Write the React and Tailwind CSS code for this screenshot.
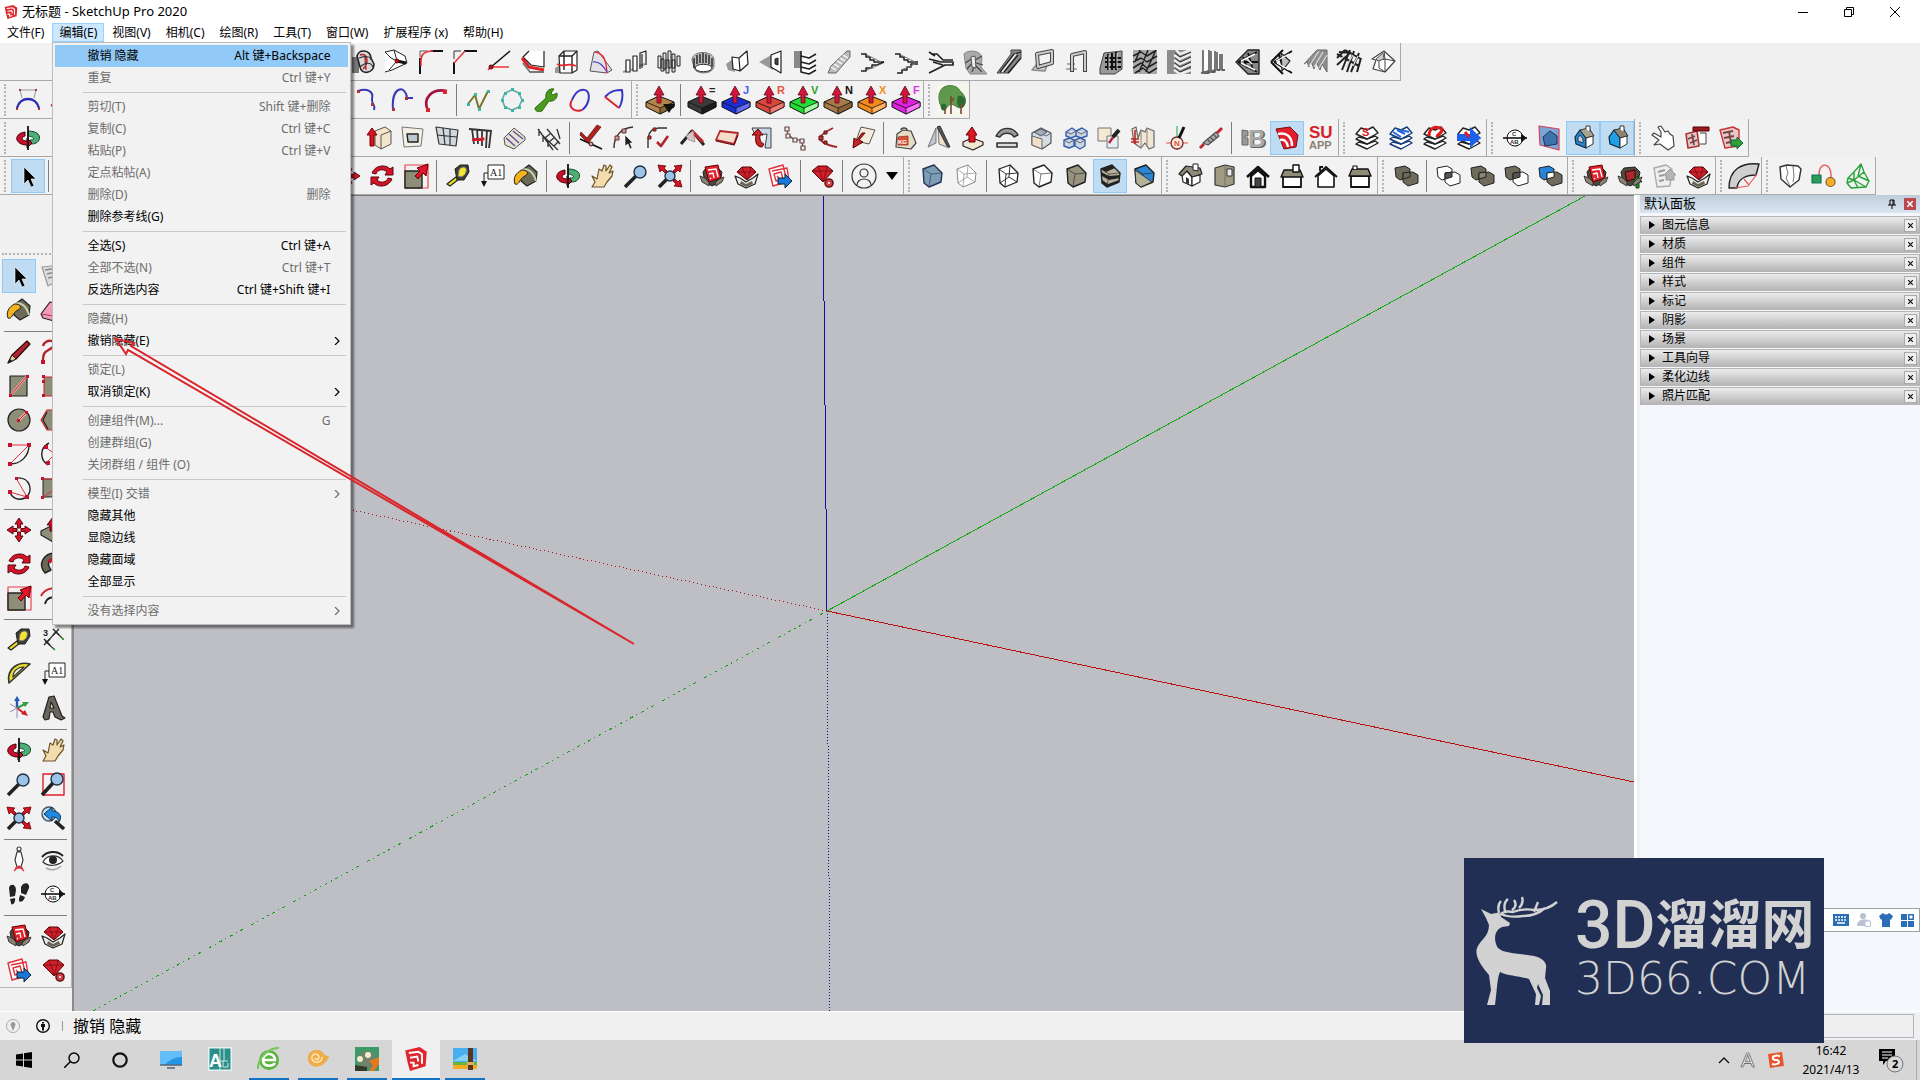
import React from 'react';

// Every icon is a list of shapes on a 24x24 grid.
// Path: [d, fill, stroke, strokeWidth]   Text: { t, x, y, size, fill }
const RED = '#c8102e';
const K = '#222';

const cube = (c, s = K) => [
  ['M3 5 L14 1 L22 9 L21 18 L9 23 L4 19 Z', c, s, 1.4],
  ['M3 5 L11 10 L22 9 M11 10 L9 23', 'none', s, 0.6],
];

const wireCube = (s, w) => [
  ['M3 5 L14 1 L22 9 L21 18 L9 23 L4 19 Z', '#fff', s, w],
  ['M3 5 L10 10 L22 9 M10 10 L9 23 M14 1 L13 13 L4 19 M13 13 L21 18', 'none', s, w * 0.7],
];

const push = (c, side, letter, lc) => [
  ['M-2 14 L11 8 L26 14 L26 19 L12 26 L-2 19 Z', c, '#111', 1],
  ['M12 20 L26 14 L26 19 L12 26 Z', side, '#111', 0.8],
  ['M-2 14 L12 20', 'none', '#111', 0.8],
  ['M9 15 V7 H6 L11 -2 L16 7 H13 V15 Z', '#d4143a', '#5a0a14', 0.8],
  { t: letter, x: 19, y: 6, size: 11, fill: lc },
];

const layers = (c, top) => [
  ['M1 18 L12 23 L23 17 L20 15 L12 18 L4 16 Z', '#fff', c, 1.4],
  ['M1 13 L12 18 L23 12 L20 10 L12 13 L4 11 Z', '#fff', c, 1.4],
  ['M1 8 L12 13 L23 7 L18 1 L12 4 L6 2 Z', '#fff', c, 1.4],
  ...top,
];

const ring = [
  ['M12 5 C22 5 25 10 23 14 C21 18 17 18 14 18 L14 14 C19 14 19 11 12 10 Z', '#4fae74', '#143', 1],
  ['M9 6 C2 7 0 11 1 14 C3 18 7 19 11 19 L11 22 L16 17 L11 12 V15 C5 15 5 11 9 10 Z', RED, '#400', 1],
  ['M12 0 V24', 'none', '#111', 1.8],
];

const lens = (cx = 15, cy = 8, r = 6) => [
  [`M${cx - r + 2} ${cy + r - 2} L1 23`, 'none', '#222', 3.6],
  [`M${cx - r} ${cy} a${r} ${r} 0 1 0 ${2 * r} 0 a${r} ${r} 0 1 0 ${-2 * r} 0`, '#9cc3e8', '#234', 1.4],
];

const solids = (a, b, mid) => [
  ['M1 4 L11 2 L16 5 V13 L6 16 L2 13 Z', a, '#222', 1],
  ['M9 9 L19 8 L24 11 V19 L14 22 L9 18 Z', b, '#222', 1],
  ['M9 9 L16 8 V13 L9 15 Z', mid, '#222', 1],
];

const box = (inner) => [
  ['M3 8 L5 18 L12 22 L20 18 L22 8 L17 3 L6 4 Z', '#4e483f', '#222', 1],
  ...inner,
  ['M0 12 L5 14 L9 18 L9 22 L2 18 Z M24 13 L19 15 L15 19 L16 22 L22 18 Z', '#8b8172', '#222', 0.8],
];

const redTile = [
  ['M5 3 L18 1 L21 14 L9 18 Z', '#e0232f', '#600', 1],
  ['M8 6 L16 5 L18 13 M9 10 L13 9 L14 14 M10 14 L11 15', 'none', '#fff', 1.3],
];

const gem = [
  ['M2 7 L8 2 H17 L23 7 L13 18 Z', '#d0202c', '#500', 1],
  ['M2 7 H23 M8 2 L10 7 L13 18 L16 7 L17 2', 'none', '#7c0b14', 0.8],
];

const openGem = [
  ['M1 12 L6 14 L12 18 L19 14 L24 10 L21 20 L12 24 L4 20 Z', '#eee', '#222', 1.2],
  ['M6 20 L12 23 L19 20 L18 17 L12 20 L7 17 Z', '#6a6355', 'none'],
  ['M3 8 L8 3 H17 L22 8 L13 16 Z', '#d0202c', '#500', 1],
  ['M3 8 H22 M8 3 L10 8 L13 16 L16 8 L17 3', 'none', '#7c0b14', 0.8],
];

const sheets = [
  ['M1 5 L15 1 L19 18 L5 22 Z M4 7 L19 4 L21 16', '#fff', '#e0303a', 1.4],
  ['M6 10 L13 8 L15 15 L8 17 Z M9 12 L11 14', 'none', '#e0303a', 1.4],
];

const bucket = [
  ['M7 7 L15 1 L23 8 L22 17 L13 22 L7 17 Z', '#6c6a56', K, 1.2],
  ['M7 7 C11 3 19 6 22 17', 'none', '#c9d2b0', 2],
  ['M8 6 C1 9 -1 15 1 20 C5 22 5 15 11 12 C15 10 14 6 8 6 Z', '#f3b31c', K, 1],
];

const house = (c, wall) => [
  ['M4 11 L9 4 L15 12 V22 L5 18 Z', wall, '#123', 1.2],
  ['M9 4 L18 2 L23 10 L15 12 Z', c, '#333', 1],
  ['M15 12 L22 10 V18 L15 22 Z', '#fff', '#333', 1],
  ['M15 3 V0 H19 V6', '#fff', '#333', 1],
];

const stairSplit = (a) => [
  ['M0 4 H5 V7 H9 V10 H13 V12 H23', 'none', K, 1.6],
  [a, 'none', K, 1.6],
  ['M6 5 L20 12 M6 20 L20 14', 'none', '#777', 1],
];

const icons = {
  swirl: [
    ['M1 7 H8 V23 H1 Z', '#777', 'none'],
    ['M6 6 C8 -1 19 -1 20 8 L23 14 C23 24 10 25 9 17 Z', '#d8d8dc', K, 1.6],
    ['M9 5 C16 2 19 12 12 19 M14 7 L15 20', 'none', '#a22', 1.4],
    ['M8 8 C14 6 20 6 20 10 M9 17 C14 12 20 12 22 17', 'none', '#333', 1.2],
  ],
  nodeBox: [
    ['M0 2 L9 0 L20 6 L22 13 L7 20 L0 22 M0 2 L6 8 L12 11 L4 20 M9 0 L12 11', '#fff', K, 1],
    ['M12 11 L21 13', 'none', '#111', 3],
    ['M10 11 a2 2 0 1 0 4 0 a2 2 0 1 0 -4 0', RED, '#600', 1],
  ],
  roundCorner: [['M1 24 V8', 'none', '#111', 2], ['M12 1 H24', 'none', '#111', 2], ['M2 16 V10 C2 4 6 1 14 1', 'none', '#f2333a', 1.6], ['M1 7 V1 H8', 'none', '#333', 0.8]],
  chamfer: [['M1 24 V12', 'none', '#111', 2], ['M11 1 H24', 'none', '#111', 2], ['M1 13 L12 1', 'none', '#f2333a', 1.6], ['M1 9 V1 H8', 'none', '#333', 1]],
  angle: [['M4 17 L23 1', 'none', '#111', 1.5], ['M4 17 H22 M1 20 L4 17', 'none', '#f2333a', 1.6], ['M2 17 a2 2 0 1 0 4 0 a2 2 0 1 0 -4 0', RED, '#500', 1]],
  edge: [['M8 1 L2 7 L10 15 L23 17 V1', '#fff', K, 1.2], ['M1 8 L8 17 L23 20', 'none', '#df2026', 3], ['M2 13 L9 22 H23', 'none', '#777', 2]],
  cage: [['M0 18 L5 15 V23 H0 Z', '#999', 'none'], ['M4 6 L9 1 H22 V20 L17 23 H5 Z', '#fff', K, 1.2], ['M4 6 H17 V23 M17 6 L22 1 M9 1 V20', 'none', K, 1.4], ['M2 14 C8 18 12 12 21 16', 'none', '#e2262c', 1.8]],
  surface: [['M5 2 L1 21 L18 23 L23 20 L9 1 Z', '#e4e0e6', '#555', 1], ['M6 2 C17 4 17 13 18 23', 'none', '#ee2d35', 1.4], ['M4 12 C10 11 14 15 18 22', 'none', '#4446cc', 1.2]],
  bars: [['M0 22 L6 20 M8 20 L14 18 M16 16 L22 14', 'none', '#999', 2], ['M3 10 H7 V22 H3 Z M10 6 H14 V21 H10 Z', '#fff', K, 1.2], ['M17 19 V3 L23 1 V15 M19 18 V4', 'none', K, 1.2]],
  manyBars: [['M1 6 H4 V18 H1 Z M6 3 H9 V19 H6 Z M11 1 H14 V18 H11 Z M15 4 H18 V18 H15 Z M20 6 H23 V16 H20 Z M4 9 H7 V21 H4 Z M9 10 H12 V23 H9 Z M15 10 H18 V22 H15 Z', '#e4e4e4', K, 1]],
  columns: [['M1 10 C1 0 23 0 23 10 V16 C23 25 3 25 3 17 Z', '#bdbdbd', '#777', 1], ['M3 8 V18 M6 5 V14 M9 4 V13 M12 3 V13 M15 4 V13 M18 5 V14 M21 8 V17', 'none', K, 1.4], ['M4 18 C4 13 21 13 21 18 C20 23 5 23 4 18 Z', '#fff', K, 1]],
  fold: [['M1 14 L8 9 L10 22 L3 20 Z', '#999', 'none'], ['M7 7 L14 8 L22 1 L23 14 L15 21 L8 19 Z M14 8 L15 21', '#fff', K, 1.2]],
  wallHole: [['M0 12 L14 4 V20 Z', '#999', 'none'], ['M12 5 L22 1 V23 L12 17 Z', '#fff', K, 1.2], ['M16 9 L19 8 V15 L16 14 Z', '#444', K, 1]],
  shelf: [['M1 1 H8 V18 H1 Z', '#888', 'none'], ['M8 1 V22 L16 24 L23 20 M8 6 L16 8 L23 4 M8 12 L16 14 L23 10 M8 17 L16 19 L23 15', '#fff', K, 1.6]],
  ramp: [['M1 23 L4 16 L20 1 H23 V7 L9 23 Z', '#bbb', '#666', 1], ['M4 17 L9 20 M7 14 L12 17 M10 11 L15 14 M13 8 L18 11 M16 5 L21 8', 'none', '#fff', 1.4]],
  stairA: stairSplit('M0 21 H5 V18 H11 V15 H16 L23 12'),
  stairB: stairSplit('M2 23 H7 V20 H12 V17 H16 V14 H23'),
  stairC: [['M0 2 L6 6 M2 4 H8 L14 10 H24 M0 9 L12 12 H24 V15 H16 L0 23 M4 12 L14 15', 'none', K, 1.7]],
  spiral: [['M1 4 C3 0 18 -1 19 8 L18 17 L24 24 H7 L3 18 Z', '#aaa', '#888', 1], ['M10 8 L2 13 M11 11 L4 19 M12 14 L9 22 M12 10 L19 6 M13 13 L20 15 M13 16 L19 22', 'none', '#444', 1.2], ['M8 7 L12 6 L13 18 L9 17 Z', '#eee', '#555', 1]],
  escalator: [['M0 23 L14 4 V0 H24 V8 L12 23 Z', '#888', '#444', 1], ['M3 22 L17 4 L24 2 M7 22 L21 5 M11 23 L24 8', 'none', '#222', 1.3], ['M5 22 L19 4', 'none', '#eee', 1.3]],
  frame: [['M1 20 L5 15 H16 L14 21 Z', '#ccc', '#888', 1.4], ['M6 4 L21 1 V13 L7 17 Z', 'none', '#444', 4], ['M6 4 L21 1 V13 L7 17 Z', 'none', '#ccc', 2]],
  arch: [['M2 14 H10 M1 19 H12', 'none', '#aaa', 2], ['M7 22 V5 L20 2 V22', 'none', '#444', 4], ['M7 21 V5 L20 2 V21', 'none', '#ccc', 2]],
  lattice: [['M1 18 L5 3 L23 1 V19 L16 24 H1 Z', '#999', '#444', 1], ['M9 4 V20 M13 3 V20 M17 2 V20 M6 8 H22 M6 12 H22 M6 17 H22', 'none', '#111', 2], ['M10 5 V20 M18 3 V19', 'none', '#eee', 0.8]],
  weave: [['M0 0 H24 V24 H0 Z', '#aaa', 'none'], ['M0 6 L8 2 L14 6 L22 1 M0 12 L8 8 L14 12 L24 6 M0 18 L8 13 L14 18 L24 12 M2 23 L10 18 L16 23 L24 18 M7 0 L2 12 M15 0 L6 22 M23 0 L13 22', 'none', '#222', 1.5]],
  louvre: [['M0 0 H24 V24 H0 Z', '#8c8c8c', 'none'], ['M9 0 L13 4 L24 0 M7 5 L13 9 L24 4 M7 10 L13 14 L24 9 M7 15 L13 19 L24 14 M7 20 L13 24 L24 20', 'none', '#eee', 2.4], ['M8 3 L13 7 L24 2 M8 8 L13 12 L24 7 M8 13 L13 17 L24 12 M8 18 L13 22 L24 17', 'none', '#333', 1]],
  curtain: [['M2 0 V23 H8 V0 M10 1 V22 H14 V1 M16 2 V20 H19 V4 M21 4 V20 H24', '#fff', '#333', 1.3], ['M0 23 L8 21 M9 22 L14 20', 'none', '#666', 2]],
  truss: [['M1 12 L13 0 H24 V24 H13 Z', '#888', K, 1.4], ['M3 12 L22 2 M3 12 L22 22 M8 7 L12 18 M13 3 L18 20 M9 12 L23 12', 'none', '#111', 1.8], ['M6 11 L20 4 M6 13 L20 20 M12 9 L17 14', 'none', '#fff', 1.4]],
  trussOpen: [['M2 12 L14 0 M2 12 L14 24 M5 12 L23 1 M5 12 L23 23 M10 5 L14 18', 'none', '#111', 2], ['M12 3 L21 11 L13 21 Z', '#bbb', K, 1.2], ['M7 11 L20 4 M8 13 L20 20', 'none', '#fff', 1.2]],
  pleats: [['M1 14 L14 0 H24 V22 L19 14 L17 20 L13 12 L11 19 L8 11 L6 17 L4 12 Z', '#8f8f8f', '#666', 1], ['M6 16 L16 1 M11 17 L20 2 M16 18 L24 5', 'none', '#ddd', 1.2]],
  hatch: [['M0 8 L8 0 M0 15 L14 2 M5 20 L13 0 M10 22 L17 1 M14 22 L22 3 M20 22 L24 8 M8 0 L24 9 M0 4 L22 16 M2 2 L14 3', 'none', '#222', 2], ['M3 10 L9 4 M9 17 L16 5 M16 16 L21 6', 'none', '#ddd', 1.2]],
  crate: [['M1 9 L13 1 L24 11 L14 22 L2 19 L5 10 Z', '#fff', '#444', 1.2], ['M13 1 L14 9 L24 11 M8 10 L14 9 L14 22 M8 10 V18 L14 22', 'none', '#444', 1], ['M5 9 L12 3 L13 9 L7 11 Z', '#ccc', '#555', 1]],

  bezier: [['M4 2 L6 10 M20 2 L18 10 M4 2 H20', 'none', '#999', 1], ['M1 20 C4 8 20 8 23 20', 'none', '#2b2bb5', 2.4], ['M3 1 h2 v2 h-2 Z M19 1 h2 v2 h-2 Z M0 20 h2 v2 h-2 Z M22 20 h2 v2 h-2 Z', '#b0332c', 'none']],
  redCurve: [['M1 18 C6 14 12 2 22 4', 'none', '#d22', 2]],
  hook: [['M2 3 C11 0 18 3 16 11 C15 16 20 16 18 22', 'none', '#3a36b5', 2], ['M1 2 h3 v3 h-3 Z M15 15 h3 v3 h-3 Z', '#a33', 'none']],
  archBlue: [['M3 22 C1 -3 16 -3 17 10 H23', 'none', '#3a36b5', 2], ['M2 20 h3 v3 h-3 Z M15 9 h3 v3 h-3 Z', '#a33', 'none']],
  arcRed: [['M4 23 C-2 10 8 0 23 3', 'none', '#a0123c', 2.6], ['M19 2 h4 v4 h-4 Z M2 20 h4 v4 h-4 Z', '#e0242e', 'none']],
  polyline: [['M2 16 L9 7 L13 21 L22 3', 'none', '#77772a', 2], ['M1 15 h3 v3 h-3 Z M8 5 h3 v3 h-3 Z M12 20 h3 v3 h-3 Z M21 2 h3 v3 h-3 Z', '#3bb5a8', 'none']],
  polygon: [['M12 2 L19 5 L22 12 L19 19 L12 22 L5 19 L2 12 L5 5 Z', 'none', '#6aa7a2', 1.6], ['M11 0 h3 v3 h-3 Z M18 4 h3 v3 h-3 Z M21 11 h3 v3 h-3 Z M18 18 h3 v3 h-3 Z M11 21 h3 v3 h-3 Z M4 18 h3 v3 h-3 Z M1 11 h3 v3 h-3 Z M4 4 h3 v3 h-3 Z', '#3bb5a8', 'none']],
  wrench: [['M1 20 L12 10 C11 4 15 0 20 1 L17 5 L19 7 L23 5 C24 11 19 14 15 13 L8 23 C5 24 1 24 1 20 Z', '#4a9a1e', '#2c6a0c', 1]],
  loop: [['M4 12 C8 2 15 0 19 3 C23 8 20 18 14 22', 'none', '#3a36c5', 2], ['M4 12 C0 18 5 25 14 22', 'none', '#e0242e', 2]],
  wedge: [['M3 9 C9 2 15 2 20 2 C21 8 20 15 17 20', 'none', '#3a36c5', 2], ['M3 9 L17 20', 'none', '#e0242e', 2]],
  pushDown: [...push('#b3854a', '#8a6534', '', K), ['M15 16 H27 L21 25 Z', '#111', 'none']],
  pushK: push('#3b3b3b', '#1c1c1c', '=', '#222'),
  pushJ: push('#1b2fd8', '#5f6df0', 'J', '#4a5cf0'),
  pushR: push('#d8473c', '#f07a70', 'R', '#e8503c'),
  pushV: push('#22dd33', '#9bffa2', 'V', '#2ca12c'),
  pushN: push('#a8794a', '#8a6036', 'N', '#111'),
  pushX: push('#f58a1c', '#ffb060', 'X', '#f58a1c'),
  pushF: push('#dd22dd', '#ff70ff', 'F', '#dd33ee'),
  tree: [
    ['M-3 -4 H29 V28 H-3 Z', '#f6f6ee', 'none'],
    ['M1 2 C4 -4 17 -4 20 3 C26 8 27 14 23 19 C18 22 15 16 10 16 C6 22 2 21 0 16 C-2 10 -1 5 1 2 Z', '#5f9a4c', '#4a7c3c', 1],
    ['M18 8 C26 6 28 16 22 20 C17 20 16 14 18 8 Z M1 17 C5 13 8 18 6 22 C2 24 0 20 1 17 Z', '#2f6a35', 'none'],
    ['M11 8 V26 M5 20 V26 M21 16 V26 M11 14 L14 10', 'none', '#7a4a2c', 1.6],
  ],

  orbit: ring,
  dark: [['M2 20 L8 14 L14 18 L10 22 Z', '#333', 'none']],
  wallUp: [['M8 5 L18 1 L24 5 V18 L14 23 L8 19 Z', '#f4e4cc', '#555', 1], ['M14 9 L24 5 M14 9 V23', 'none', '#555', 1], ['M3 20 V9 H0 L5 2 L10 9 H7 V20 Z', '#d81424', '#700', 1]],
  window: [['M1 1 L22 3 L20 20 L3 21 Z', '#f3efe2', '#777', 1], ['M6 8 L17 8 L17 16 L7 16 Z', '#bcc8cc', '#222', 1.4]],
  grid: [['M1 1 L23 4 L21 20 L4 18 Z', '#cfd8dd', '#333', 1.2], ['M8 2 L10 19 M15 3 L15 19 M2 9 L22 11', 'none', '#333', 1.2]],
  fence: [['M0 3 L23 5 M3 3 L5 18 M8 3 L9 18 M13 4 L13 20 M18 4 L17 22 M22 5 L20 22', 'none', '#333', 1.8], ['M3 12 H12 V9 L16 13 L12 17 V15 H3 Z', '#c8242e', 'none']],
  steps: [['M1 12 L11 2 L22 11 V14 L11 23 L2 19 Z', '#e8e0d0', '#555', 1], ['M3 12 L12 20 M6 8 L16 17 M10 5 L20 13', 'none', '#5a52a0', 1.4]],
  rail: [['M1 3 L16 24 M5 9 L21 24 M2 3 V10 M6 9 V16 M11 15 V21 M20 3 L23 13 M10 3 L23 18 M14 7 L8 12 M18 11 L12 16 M22 15 L17 20', 'none', '#333', 1.3]],
  check: [['M1 13 L12 18 L23 23', 'none', '#111', 1.8], ['M2 6 L8 12 L18 -1 L22 1 L10 16 H8 L1 9 Z', '#b02222', '#611', 0.8], ['M12 18 m-2 0 a2 2 0 1 0 4 0 a2 2 0 1 0 -4 0', '#caa', '#511', 1]],
  curveSel: [['M1 22 C1 10 8 2 20 1', 'none', '#333', 1.4], ['M2 10 h4 v4 h-4 Z M9 3 h4 v4 h-4 Z', '#c99', '#633', 1], ['M12 9 V20 L15 18 L17 23 L19 22 L17 17 H20 Z', '#222', '#fff', 0.6]],
  curveCheck: [['M1 22 V12 C2 6 6 2 12 2 H20', 'none', '#333', 1.4], ['M1 10 h3 v3 h-3 Z M6 2 h3 v3 h-3 Z', '#c33', '#622', 1], ['M10 16 L14 20 L21 10', 'none', '#b3242a', 2.6]],
  peak: [['M0 18 L11 5 L23 19', 'none', '#222', 3], ['M11 5 L22 16', 'none', '#c1272d', 3], ['M5 10 L12 5 L14 16 L8 14 Z', '#d9c5c5', '#a99', 1]],
  slabRed: [['M5 5 L23 7 L19 18 L1 14 Z', '#f6dccb', '#b12830', 1.8], ['M1 15 L19 19 L23 9', 'none', '#6a1014', 1.2]],
  wrapRed: [['M3 2 H22 V22 H16 L18 8 L6 9 Z', '#c8d6e6', '#444', 1], ['M13 21 C6 21 6 13 7 9 H3 L9 3 L14 9 H11 C10 15 13 17 15 18 Z', '#c1272d', '#600', 1]],
  chain: [['M2 1 h4 v4 h-4 Z M3 8 h4 v4 h-4 Z M10 12 h4 v4 h-4 Z M17 13 h4 v4 h-4 Z M18 20 h4 v4 h-4 Z', '#eee', '#644', 1.2], ['M4 5 L5 8 M7 10 L10 13 M14 14 H17 M19 17 L20 20', 'none', '#644', 1.2]],
  vee: [['M16 2 C8 6 3 9 3 12 C3 15 8 19 20 21', 'none', '#a1282c', 1.8], ['M7 5 h3 v3 h-3 Z M2 10 h4 v4 h-4 Z M7 15 h3 v3 h-3 Z', '#c33', '#511', 1]],
  pageRed: [['M10 1 L24 4 L18 18 L5 15 Z', '#f4ecdc', '#555', 1], ['M14 7 L8 14 L12 16 L2 22 L3 12 L6 14 L11 7 Z', '#c1272d', '#600', 1]],
  kg: [['M4 8 L10 4 L18 5 L23 17 L18 23 L3 21 Z', '#e6dcc6', '#444', 1.2], ['M8 4 a3 2 0 1 1 6 0', 'none', '#444', 1.4], ['M5 11 L15 10 L15 19 L5 19 Z', '#e05030', '#833', 0.8], { t: 'KG', x: 5, y: 18, size: 6, fill: '#fff' }],
  mirror: [['M9 2 L1 21 L9 17 Z', '#bdc7d2', '#777', 1], ['M11 1 L22 22 L12 18 Z', '#f0e0c4', '#777', 1], ['M10 1 L13 0 L23 21 L20 20 Z', '#555', '#333', 1]],
  slabUp: [['M2 16 L11 12 L22 16 V19 L12 24 L2 20 Z', '#f2e8d2', '#222', 1.2], ['M8 16 V9 H5 L11 1 L16 9 H14 V16 Z', '#e01828', '#600', 1]],
  arcBar: [['M1 10 C6 0 18 0 23 9 L19 11 C16 6 8 6 5 11 Z', '#999', '#333', 1.4], ['M2 17 H22 V21 H2 Z', '#ddd', '#333', 1.6]],
  cubeIn: [['M3 7 L12 2 L22 7 V17 L13 23 L3 19 Z', '#d3dde4', '#555', 1.2], ['M3 10 L13 13 L13 23 L3 19 Z', '#f0e0c8', '#666', 1], ['M8 5 L17 10 L22 7', 'none', '#666', 1], ['M5 6 L12 3 L18 6 L12 10 Z', '#9fb0bc', '#556', 1]],
  tiles: [['M3 6 L9 2 L13 5 V10 L8 12 L3 10 Z M13 5 L19 2 L24 5 V10 L18 12 L13 10 Z M1 14 L7 12 L11 14 V20 L6 22 L1 20 Z M12 14 L17 12 L22 14 V20 L17 23 L12 20 Z', '#ccd6e0', '#3a5fb0', 1.4], ['M3 6 L8 8 L13 5 M13 5 L18 8 L24 5 M1 14 L6 17 L11 14 M12 14 L17 17 L22 14', 'none', '#667', 1]],
  pick: [['M1 2 H14 V15 H1 Z', '#f4e9d2', '#777', 1], ['M10 10 H21 V22 H10 Z', '#e6edf4', '#777', 1], ['M12 17 L17 10', 'none', '#b23', 2.4], ['M16 11 L22 4', 'none', '#222', 4]],
  warp: [['M1 3 L5 1 L7 12 L10 4 L14 6 L16 2 L23 5 V21 L18 23 L14 17 L10 22 L3 17 Z', '#f1e6d4', '#666', 1.2], ['M4 4 V18 M0 13 H8 M0 16 H8', 'none', '#c1272d', 1.6], ['M10 4 V22 M16 2 V20', 'none', '#888', 1]],
  compassN: [['M1 17 H23 M12 17 V24', 'none', '#f04a4a', 1.2], ['M12 12 V0', 'none', '#3db554', 1.2], ['M6 17 a6 6 0 1 0 12 0 a6 6 0 1 0 -12 0', '#f6e7dc', '#733', 1.4], ['M14 12 L19 1', 'none', '#111', 3], { t: 'N', x: 9, y: 20, size: 8, fill: '#e0502e' }],
  screw: [['M4 17 L17 6 L20 10 L9 19 Z', '#aaa', '#555', 1.2], ['M1 22 L5 18 M18 7 L23 2', 'none', '#c1272d', 3], ['M8 13 L12 17 M11 11 L15 15 M14 8 L18 12', 'none', '#555', 1.2]],
  rb: [{ t: 'B', x: 8, y: 22, size: 25, fill: '#666' }, { t: 'B', x: 7, y: 21, size: 24, fill: '#aaa' }, ['M1 4 L7 5 V10 H4 V12 H7 V19 H1 Z', '#999', '#666', 1]],
  suRed: [['M1 3 L15 1 L23 9 L21 21 L9 23 Z', '#df1f2b', '#7a0c14', 1], ['M3 8 C12 6 17 11 17 20 M5 14 C9 13 12 15 13 21', 'none', '#fff', 2.4]],
  suapp: [{ t: 'SU', x: 0, y: 12, size: 17, fill: '#d61f2b' }, { t: 'APP', x: 0, y: 23, size: 11, fill: '#8a7f70' }],
  layerS: layers('#222', [{ t: 'S', x: 7, y: 10, size: 11, fill: '#e02020' }]),
  layerBlue: layers('#143a78', [['M4 6 L12 11 M8 4 L16 8 M12 4 L20 6', 'none', '#2266dd', 2]]),
  layerRed: layers('#222', [['M6 10 C6 2 12 -1 19 3 C20 7 14 8 14 11', 'none', '#e01818', 3]]),
  layerArrow: layers('#222', [['M0 8 H13 V1 L24 12 L13 22 V15 H0 Z', '#1e60ee', 'none'], ['M8 6 L12 11', 'none', '#e02020', 3]]),
  section: [['M13 3 L23 12 L13 21 L18 12 Z', '#111', 'none'], ['M4 12 a8 8 0 1 0 16 0 a8 8 0 1 0 -16 0', '#fff', '#111', 1], ['M0 12 H24', 'none', '#111', 1.6], ['M18 8 L24 12 L18 16 Z', '#111', 'none'], { t: 'C', x: 9, y: 10, size: 6, fill: '#333' }, { t: 'AB', x: 7, y: 18, size: 6, fill: '#333' }],
  sectionPlane: [['M2 0 L22 3 V24 L3 19 Z', '#7aa4d8', '#d8405a', 1.2], ['M6 11 L13 5 L20 10 V18 L8 20 Z', '#3f72a8', '#235', 1]],
  houseBlue: [...house('#a8a290', '#2a85d0'), ['M7 12 L9 9 L12 13 V17 L7 15 Z', '#ccd', '#245', 1]],
  houseCyan: house('#8a8470', '#20a0e8'),
  handWhite: [['M3 7 L10 11 V6 L7 1 L10 0 L14 6 L17 5 L19 8 L22 10 L23 20 L17 24 L9 18 L3 19 L8 14 L1 9 Z', '#fff', '#444', 1.2]],
  listRed: [['M1 8 L12 5 L14 20 L3 22 Z', '#e8c8c8', '#a33', 1.6], ['M8 1 H24 V5 H8 Z', '#a01820', '#500', 1], ['M15 7 H21 V18 H15', '#fff', '#444', 1], ['M3 13 L10 10 M5 17 L12 14 M7 8 L9 19', 'none', '#744', 1.8]],
  pageGreen: [['M1 4 L14 1 L20 4 V20 L6 22 Z', '#e8c8c8', '#c33', 1.4], ['M4 7 L14 5 M5 12 L15 10 M7 17 L12 16 M10 5 L12 18', 'none', '#744', 1.8], ['M12 14 H18 V11 L24 17 L18 23 V20 H12 Z', '#2fa038', '#164', 1]],

  cursor: [['M8 3 V20 L12 16 L15 23 L18 22 L15 15 H20 Z', '#000', '#fff', 0.6]],
  move: [['M12 0 L16 6 H13.500 V10 H10.500 V6 H8 Z M12 24 L16 18 H13.500 V14 H10.500 V18 H8 Z M0 12 L6 8 V10.500 H10 V13.500 H6 V16 Z M24 12 L18 8 V10.500 H14 V13.500 H18 V16 Z', '#d21426', '#5c0710', 1]],
  rotate: [['M2 9 C5 1 16 0 20 5 L23 3 V11 H15 L17 8 C13 4 7 6 6 10 Z', '#d21426', '#5c0710', 1], ['M22 15 C19 23 8 24 4 19 L1 21 V13 H9 L7 16 C11 20 17 18 18 14 Z', '#d21426', '#5c0710', 1]],
  scale: [['M1 1 H24 V24 H1 Z', 'none', '#e8434b', 1.2], ['M1 7 H18 V24 H1 Z', '#8e8d78', '#222', 1.4], ['M11 12 L16 7 L13 4 L24 0 L22 12 L19 9 L14 15 Z', '#e0142a', '#600', 1]],
  tape: [['M1 20 L10 13 L13 15 L4 22 Z', '#f2e02a', K, 1.2], ['M9 5 L14 1 L22 1 L23 8 L18 16 L11 16 Z', '#3c3c36', K, 1], ['M13 6 C16 1 22 3 20 8 C19 12 15 14 12 12 Z', '#f2e430', '#777', 1]],
  text: [['M8 1 H24 V15 H8 Z', '#fff', '#222', 1], ['M8 9 H4 V20', 'none', '#222', 1], ['M1 17 H7 L4 23 Z', '#111', 'none'], { t: 'A1', x: 10, y: 12, size: 10, fill: '#222', serif: true }],
  bucket,
  hand: [['M2 12 L7 15 L9 5 L12 7 L14 1 L16 2 L16 7 L20 1 L22 3 L19 9 L23 7 L22 12 L17 18 L14 23 H2 L5 18 Z', '#f3dcae', '#6b5327', 1.2]],
  zoom: lens(16, 8, 6),
  zoomBox: [['M2 2 H23 V23 H2 Z', 'none', '#e0202c', 1.4], ...lens(16, 7, 6)],
  zoomAll: [...lens(12, 12, 5), ['M0 1 L8 2 L6 4 L9 7 L7 9 L4 6 L2 8 Z M24 1 L16 2 L18 4 L15 7 L17 9 L20 6 L22 8 Z M24 23 L16 22 L18 20 L15 17 L17 15 L20 18 L22 16 Z', '#d21426', '#600', 0.8]],
  zoomBack: [['M1 8 a7 7 0 1 0 14 0 a7 7 0 1 0 -14 0', '#c5dcf0', '#456', 1.4], ['M14 15 L23 23', 'none', '#222', 3.6], ['M3 8 L11 1 V5 C18 5 22 10 18 16 C17 12 15 11 11 11 V15 Z', '#1e8ae6', '#134', 1]],
  boxTile: box(redTile),
  boxGem: openGem,
  boxGreen: box([['M7 8 L17 6 L17 15 L9 17 Z', '#a52a30', '#400', 1], ['M18 24 V18 H15 L19 12 L24 18 H21 V24 Z', '#2a9020', '#142', 1]]),
  boxGrey: [['M2 4 L14 1 L20 5 L18 22 L5 23 Z', '#eee', '#aaa', 1.4], ['M6 8 L13 6 M7 12 L12 11 M7 17 L12 16', 'none', '#999', 2], ['M14 16 V11 H12 L18 5 L24 11 H22 V16 Z', '#b5b5b5', '#999', 1]],
  layout: [...sheets, ['M10 14 H17 V10 L24 17 L17 24 V20 H10 Z', '#1a78d8', '#123', 1]],
  gemGear: [...gem, ['M15 19 a4 4 0 1 0 8 0 a4 4 0 1 0 -8 0', '#d04048', '#6b1016', 1.6], ['M18 19 a1 1 0 1 0 2 0 a1 1 0 1 0 -2 0', '#fff', 'none']],
  user: [['M0 12 a12 12 0 1 0 24 0 a12 12 0 1 0 -24 0', 'none', '#333', 1.2], ['M8 9 a4 4 0 1 0 8 0 a4 4 0 1 0 -8 0 M5 21 C5 13 19 13 19 21', 'none', '#333', 1.2]],

  cubeXray: cube('#7d9db5', '#235'),
  cubeBack: wireCube('#888', 1),
  cubeWire: wireCube('#222', 1.3),
  cubeHidden: cube('#fff'),
  cubeShaded: cube('#97937f'),
  cubeTex: [...cube('#b5b09a'), ['M3 8 L11 12 L22 11 V14 L11 16 L4 12 Z M4 16 L10 20 L21 16 V18 L9 23 L4 19 Z M3 5 L14 1 L17 4 L8 8 Z', '#222', 'none']],
  cubeMono: [...cube('#2a86d2'), ['M3 6 L20 18 L9 23 L4 19 Z', '#b5b09a', K, 0.8]],
  iso: [['M4 11 L9 7 L14 13 V22 L5 18 Z', '#fff', K, 1.2], ['M1 10 L8 2 L22 4 L24 10 L14 13 L9 7 L4 12 Z', '#8e8c78', K, 1.2], ['M14 13 L22 11 V18 L14 22 Z', '#fff', K, 1.2], ['M15 0 H20 V7 L15 6 Z', '#fff', K, 1], ['M8 13 L11 15 V20 L8 19 Z', '#333', 'none']],
  top: [['M3 4 L13 1 L22 3 V20 L13 23 L3 21 Z', '#a09c84', '#333', 1.2], ['M13 1 V23', 'none', '#77735e', 1], ['M15 5 H20 V12 H15 Z', '#eee', '#333', 1]],
  front: [['M5 12 L12 6 L19 12 V23 H5 Z', '#fff', '#111', 2.4], ['M1 13 L12 3 L23 13', 'none', '#111', 2.4], ['M9 14 H15 V23 H9 Z', '#444', '#111', 1]],
  right: [['M3 12 H21 V23 H3 Z', '#fff', '#111', 1.8], ['M4 6 H20 L23 13 H1 Z', '#8e8c78', '#111', 1.4], ['M13 1 H19 V8 H13 Z', '#fff', '#111', 1.4]],
  back: [['M4 12 L12 5 L20 12 V23 H4 Z', '#fff', '#111', 1.6], ['M1 13 L12 3 L23 13 M6 7 V3 H9', 'none', '#111', 1.8]],
  left: [['M3 12 H21 V23 H3 Z', '#fff', '#111', 1.8], ['M4 5 H20 L23 12 H1 Z', '#8e8c78', '#111', 1.4], ['M5 5 V2 H9 V5', '#fff', '#111', 1.2]],
  outer: solids('#6e6b5c', '#6e6b5c', '#6e6b5c'),
  intersect: solids('#fff', '#fff', '#555'),
  union: solids('#6e6b5c', '#6e6b5c', '#8a8774'),
  subtract: solids('#6e6b5c', '#fff', '#555'),
  trim: solids('#2583d8', '#6e6b5c', '#fff'),
  arcPanel: [['M-3 24 C-3 6 9 -2 27 0 L24 11 C14 11 6 15 5 24 Z', '#cfcfcf', '#222', 1.4], ['M3 24 L16 22 L25 10 M12 15 L17 21', 'none', '#e8545a', 1.2]],
  rock: [['M2 3 L9 1 L20 2 L23 5 L21 16 L12 23 L3 15 Z', '#fff', '#333', 1.4], ['M8 2 L10 9 L8 14 L12 22 M15 2 L16 12 L15 18', 'none', '#777', 1]],
  link: [['M7 13 C5 -2 20 -4 19 14', 'none', '#f0555a', 1.4], ['M0 11 H9 V19 H0 Z', '#2c9a58', '#175', 1.2], ['M14 18 a4.500 4.500 0 1 0 9 0 a4.500 4.500 0 1 0 -9 0', '#f4b020', '#853', 1.2]],
  mesh: [['M2 14 L8 8 L15 0 L18 8 L23 17 L20 23 L5 24 L1 19 Z M2 14 L8 16 L18 8 M8 8 L8 16 L12 24 M15 0 L12 12 L23 17 M1 19 L8 16 L20 23', 'none', '#27a33b', 1.4]],

  eraseGrey: [['M1 3 L20 1 L22 8 L14 11 L16 17 L7 22 Z', '#ddd', '#999', 1.2], ['M4 6 L17 4 M6 10 L14 8 M7 14 L12 13', 'none', '#888', 1.4]],
  eraser: [['M0 16 L9 4 L22 6 L24 12 L13 23 L2 20 Z', '#f29bb5', '#222', 1.2], ['M0 16 L13 18 L22 6 M13 18 V23', 'none', '#a33a5a', 1]],
  pencil: [['M1 23 L5 15 L20 1 L23 4 L9 19 Z', '#b0252c', '#2c0a0a', 1.2], ['M1 23 L5 15 L9 19 Z', '#e7cfa0', '#222', 1], ['M1 23 L3 19 L5 21 Z', '#111', 'none']],
  freehand: [['M2 6 C4 -2 18 0 12 7 C6 12 2 10 2 21', 'none', '#b0252c', 2.4], ['M0 20 h4 v4 h-4 Z', RED, 'none']],
  rect: [['M3 2 H20 V22 H3 Z', '#8e8d78', '#222', 1.2], ['M3 22 L21 1', 'none', '#f5b0a8', 2.4], ['M3 22 L21 1', 'none', '#d0202c', 1], ['M2 20 h3 v3 h-3 Z M19 1 h3 v3 h-3 Z', RED, 'none']],
  rotRect: [['M3 3 H22 V22 H3 Z', '#8e8d78', '#d0202c', 1], ['M1 1 h3 v3 h-3 Z M1 6 h3 v3 h-3 Z M1 20 h3 v3 h-3 Z', RED, 'none']],
  circle: [['M1 12 a11 11 0 1 0 22 0 a11 11 0 1 0 -22 0', '#8e8d78', '#222', 1.2], ['M12 12 L20 4', 'none', '#f5b0a8', 2.6], ['M12 12 L20 4', 'none', '#d0202c', 1], ['M10 11 h3 v3 h-3 Z M18 3 h3 v3 h-3 Z', RED, 'none']],
  hexagon: [['M6 2 H18 L24 12 L18 22 H6 L0 12 Z', '#8e8d78', '#d0202c', 1.2], ['M6 4 L2 12 L7 21', 'none', '#222', 1.2]],
  arc: [['M3 22 C14 22 22 14 22 3', 'none', '#222', 1.4], ['M3 3 H22 L3 22', 'none', '#e0303a', 1], ['M1 1 h4 v4 h-4 Z M20 1 h4 v4 h-4 Z M1 20 h4 v4 h-4 Z', RED, 'none']],
  arc2: [['M8 1 C-2 6 -1 18 7 23', 'none', '#222', 1.4], ['M4 5 L14 12 L6 20', 'none', '#e0303a', 1], ['M3 3 h4 v4 h-4 Z M5 19 h4 v4 h-4 Z', RED, 'none']],
  arc3: [['M9 2 C24 0 27 17 18 22 C11 25 5 22 3 16', 'none', '#222', 1.4], ['M9 2 L20 21 L3 16', 'none', '#e0303a', 1], ['M8 1 h3 v3 h-3 Z M1 14 h4 v4 h-4 Z M18 19 h4 v4 h-4 Z', RED, 'none']],
  pie: [['M2 3 L22 3 V14 L10 21 L2 21 Z', '#8e8d78', '#222', 1], ['M2 3 H22 M2 21 L22 8', 'none', '#e0303a', 1], ['M0 1 h3 v3 h-3 Z M0 20 h3 v3 h-3 Z', RED, 'none']],
  pushSide: [['M0 13 L12 7 L24 13 V17 L12 24 L0 17 Z', '#8e8d78', '#222', 1.2], ['M9 13 V7 H6 L12 -1 L17 7 H14 V13 Z', '#c8102e', '#500', 1]],
  follow: [['M4 21 C-4 12 3 1 14 1 C23 2 24 12 18 20 L12 18 C17 12 16 7 12 7 C7 8 6 13 10 18 Z', '#6a6658', '#222', 1.4], ['M8 10 C12 6 16 9 14 14', 'none', '#c8102e', 4]],
  offset: [['M0 10 C4 2 14 0 22 5', 'none', '#d21a2a', 1.8], ['M4 18 C6 10 14 10 19 14', 'none', '#222', 1.8]],
  dimension: [['M6 14 L15 4 L22 11 M4 13 L14 22', 'none', '#333', 1.2], ['M12 1 L18 7 M18 1 L12 7 M3 11 L9 17 M9 11 L3 17', 'none', '#222', 1.4], ['M21 10 h2 v2 h-2 Z M12 20 h2 v2 h-2 Z', '#3a4', 'none'], { t: '3', x: 2, y: 8, size: 9, fill: '#222' }],
  protractor: [['M2 21 C-1 6 12 -1 23 2 Z', '#e8da2e', '#333', 1.6], ['M6 15 C6 8 12 5 17 5 Z', '#f2f2f2', '#333', 1.2]],
  axes: [['M10 12 V4', 'none', '#2458c0', 2.4], ['M7 5 L10 0 L13 5 Z', '#2458c0', 'none'], ['M10 12 L18 8', 'none', '#2fa045', 2], ['M15 6 L22 6 L18 11 Z', '#2fa045', 'none'], ['M10 12 L18 18', 'none', '#d0202c', 2], ['M14 18 L21 20 L18 14 Z', '#d0202c', 'none'], ['M10 12 V22 M10 12 L3 8 M10 12 L3 16', 'none', '#98b', 1]],
  text3d: [['M2 21 L8 1 L13 0 L21 20 L24 22 L20 24 L14 21 L12 16 L9 16 L8 23 L4 24 Z M9 12 L13 12 L10 6 Z', '#6a665c', '#222', 1.2]],
  person: [['M10 1 a2 2 0 1 0 4 0 a2 2 0 1 0 -4 0 M10 4 H14 L16 12 L14 19 H10 L8 12 Z', '#fff', '#333', 1.1], ['M7 23 L12 18 L17 23 M8 20 H16', 'none', '#e0303a', 1.4]],
  eye: [['M2 14 C6 6 17 6 22 13 C17 18 7 19 2 14 Z', '#fff', '#333', 1.2], ['M1 9 C6 3 16 2 22 8', 'none', '#222', 2], ['M8 12 a4 4 0 1 0 8 0 a4 4 0 1 0 -8 0', '#222', 'none'], ['M5 20 C10 23 16 22 20 18', 'none', '#aaa', 1.6]],
  feet: [['M2 6 C3 1 9 2 9 8 L8 14 L3 15 Z M3 17 L8 16 C9 22 4 24 4 21 Z', '#222', 'none'], ['M14 5 C17 -1 23 1 22 6 L19 13 L14 11 Z M13 13 L18 15 C16 21 11 21 12 17 Z', '#222', 'none']],
};

function Icon({ name }) {
  return (
    <svg viewBox="0 0 24 24" className="size-6 overflow-visible" aria-hidden="true">
      {icons[name].map((s, i) =>
        Array.isArray(s) ? (
          <path key={i} d={s[0]} fill={s[1]} stroke={s[2]} strokeWidth={s[3] || 1} strokeLinejoin="round" />
        ) : (
          <text
            key={i}
            x={s.x}
            y={s.y}
            fontSize={s.size}
            fill={s.fill}
            fontWeight={s.serif ? 400 : 700}
            fontFamily={s.serif ? 'Liberation Serif, serif' : 'Liberation Sans, sans-serif'}
          >
            {s.t}
          </text>
        )
      )}
    </svg>
  );
}

function ToolButton({ name, active }) {
  return (
    <button
      aria-label={name}
      className={`flex h-[34px] w-[34px] shrink-0 items-center justify-center border ${
        active ? 'border-[#90c8f6] bg-[#c0dcf3]' : 'border-transparent'
      }`}
    >
      <Icon name={name} />
    </button>
  );
}

// '|' is a separator, 'caret' a narrow drop-down arrow, a leading '*' marks a pressed tool
function renderTool(name, i) {
  if (name === '|') {
    return <span key={i} className="mx-[3px] h-8 w-0.5 shrink-0 border-l border-[#7d7d7d]" />;
  }
  if (name === 'caret') {
    return (
      <button key={i} aria-label="account menu" className="flex w-[22px] shrink-0 justify-center">
        <svg viewBox="0 0 12 8" className="h-2 w-3"><path d="M0 0 H12 L6 8 Z" /></svg>
      </button>
    );
  }
  const active = name[0] === '*';
  return <ToolButton key={i} name={active ? name.slice(1) : name} active={active} />;
}

function ToolGroup({ tools, lead, gap, noGrip }) {
  return (
    <div className="flex h-[38px] shrink-0 items-center border-r border-b border-[#a9a9a9] bg-[#f2f2f2]">
      {!noGrip && <span className="mr-1 ml-1 h-8 w-[3px] shrink-0 border-l-2 border-dotted border-[#b4b4b4]" />}
      {lead && lead.map(renderTool)}
      {gap && <span className={`shrink-0 ${gap}`} />}
      {tools.map(renderTool)}
    </div>
  );
}

const toolRows = [
  [
    {
      noGrip: true,
      gap: 'w-[346px]',
      tools: ['swirl', 'nodeBox', 'roundCorner', 'chamfer', 'angle', 'edge', 'cage', 'surface', 'bars', 'manyBars', 'columns', 'fold', 'wallHole', 'shelf', 'ramp', 'stairA', 'stairB', 'stairC', 'spiral', 'escalator', 'frame', 'arch', 'lattice', 'weave', 'louvre', 'curtain', 'truss', 'trussOpen', 'pleats', 'hatch', 'crate'],
    },
  ],
  [
    {
      lead: ['bezier', 'redCurve'],
      gap: 'w-[272px]',
      tools: ['hook', 'archBlue', 'arcRed', '|', 'polyline', 'polygon', 'wrench', 'loop', 'wedge'],
    },
    { tools: ['pushDown', '|', 'pushK', 'pushJ', 'pushR', 'pushV', 'pushN', 'pushX', 'pushF'] },
    { tools: ['tree'] },
  ],
  [
    {
      lead: ['orbit', 'dark'],
      gap: 'w-[249px]',
      tools: ['dark', 'wallUp', 'window', 'grid', 'fence', 'steps', 'rail', '|', 'check', 'curveSel', 'curveCheck', 'peak', 'slabRed', 'wrapRed', 'chain', 'vee', 'pageRed', '|', 'kg', 'mirror', 'slabUp', 'arcBar', 'cubeIn', 'tiles', 'pick', 'warp', 'compassN', 'screw', '|', 'rb', '*suRed', 'suapp'],
    },
    { tools: ['layerS', 'layerBlue', 'layerRed', 'layerArrow'] },
    { tools: ['section', 'sectionPlane', '*houseBlue', '*houseCyan'] },
    { tools: ['handWhite', 'listRed', 'pageGreen'] },
  ],
  [
    {
      lead: ['*cursor', '|'],
      gap: 'w-[278px]',
      tools: ['move', 'rotate', 'scale', '|', 'tape', 'text', 'bucket', '|', 'orbit', 'hand', 'zoom', 'zoomAll', '|', 'boxTile', 'boxGem', 'layout', '|', 'gemGear', '|', 'user', 'caret'],
    },
    { tools: ['cubeXray', 'cubeBack', '|', 'cubeWire', 'cubeHidden', 'cubeShaded', '*cubeTex', 'cubeMono'] },
    { tools: ['iso', 'top', 'front', 'right', 'back', 'left'] },
    { tools: ['outer', '|', 'intersect', 'union', 'subtract', 'trim'] },
    { tools: ['boxTile', 'boxGreen', 'boxGrey', 'boxGem'] },
    { tools: ['arcPanel'] },
    { tools: ['rock', 'link', 'mesh'] },
  ],
];

const sideTools = [
  ['*cursor', 'eraseGrey', 'bucket', 'eraser'],
  ['pencil', 'freehand', 'rect', 'rotRect', 'circle', 'hexagon', 'arc', 'arc2', 'arc3', 'pie'],
  ['move', 'pushSide', 'rotate', 'follow', 'scale', 'offset'],
  ['tape', 'dimension', 'protractor', 'text', 'axes', 'text3d'],
  ['orbit', 'hand', 'zoom', 'zoomBox', 'zoomAll', 'zoomBack'],
  ['person', 'eye', 'feet', 'section'],
  ['boxTile', 'boxGem', 'layout', 'gemGear'],
];

const menus = ['文件(F)', '编辑(E)', '视图(V)', '相机(C)', '绘图(R)', '工具(T)', '窗口(W)', '扩展程序 (x)', '帮助(H)'];

const editMenu = [
  [
    { label: '撤销 隐藏', keys: 'Alt 键+Backspace', hover: true },
    { label: '重复', keys: 'Ctrl 键+Y', off: true },
  ],
  [
    { label: '剪切(T)', keys: 'Shift 键+删除', off: true },
    { label: '复制(C)', keys: 'Ctrl 键+C', off: true },
    { label: '粘贴(P)', keys: 'Ctrl 键+V', off: true },
    { label: '定点粘帖(A)', off: true },
    { label: '删除(D)', keys: '删除', off: true },
    { label: '删除参考线(G)' },
  ],
  [
    { label: '全选(S)', keys: 'Ctrl 键+A' },
    { label: '全部不选(N)', keys: 'Ctrl 键+T', off: true },
    { label: '反选所选内容', keys: 'Ctrl 键+Shift 键+I' },
  ],
  [{ label: '隐藏(H)', off: true }, { label: '撤销隐藏(E)', sub: true }],
  [{ label: '锁定(L)', off: true }, { label: '取消锁定(K)', sub: true }],
  [
    { label: '创建组件(M)...', keys: 'G', off: true },
    { label: '创建群组(G)', off: true },
    { label: '关闭群组 / 组件 (O)', off: true },
  ],
  [
    { label: '模型(I) 交错', off: true, sub: true },
    { label: '隐藏其他' },
    { label: '显隐边线' },
    { label: '隐藏面域' },
    { label: '全部显示' },
  ],
  [{ label: '没有选择内容', off: true, sub: true }],
];

const panels = ['图元信息', '材质', '组件', '样式', '标记', '阴影', '场景', '工具向导', '柔化边线', '照片匹配'];

function SketchUpLogo({ className }) {
  return (
    <svg viewBox="0 0 20 20" className={className} aria-hidden="true">
      <path d="M1 3 L13 0 L19 4 L18 16 L5 20 L3 13 Z" fill="#e0262d" />
      <path d="M4 5 L12 4 L15 6 V14 M5 9 L11 8 L12 12 M5 13 L8 13 V16 L12 15" fill="none" stroke="#fff" strokeWidth="1.6" />
    </svg>
  );
}

function TitleBar() {
  return (
    <header className="flex h-[23px] shrink-0 items-center bg-white pl-1">
      <SketchUpLogo className="size-3.5" />
      <h1 className="ml-1 text-[13px]">无标题 - SketchUp Pro 2020</h1>
      <div className="mr-0.5 ml-auto flex">
        <button aria-label="最小化" className="flex w-[46px] justify-center">
          <svg viewBox="0 0 10 10" className="size-2.5"><path d="M0 5.500 H10" stroke="#000" /></svg>
        </button>
        <button aria-label="还原" className="flex w-[46px] justify-center">
          <svg viewBox="0 0 10 10" className="size-2.5"><path d="M.5 2.500 H7.500 V9.500 H.5 Z M2.500 2.500 V.5 H9.500 V7.500 H7.500" fill="none" stroke="#000" /></svg>
        </button>
        <button aria-label="关闭" className="flex w-[46px] justify-center">
          <svg viewBox="0 0 10 10" className="size-2.5"><path d="M0 0 L10 10 M10 0 L0 10" stroke="#000" /></svg>
        </button>
      </div>
    </header>
  );
}

function EditMenu() {
  return (
    <div role="menu" className="absolute top-[19px] left-0 z-20 w-[299px] border border-[#bdbdbd] bg-[#f2f2f2] p-0.5 shadow-[3px_3px_2px_rgba(0,0,0,0.45)]">
      {editMenu.map((section, i) => (
        <div key={i}>
          {i > 0 && <div className="mr-0.5 ml-7 flex h-[7px] items-center"><hr className="w-full border-[#c9c9c9]" /></div>}
          {section.map((item) => (
            <button
              key={item.label}
              role="menuitem"
              disabled={item.off}
              className={`flex h-[22px] w-full items-center pr-1 pl-8 text-xs ${item.hover ? 'bg-[#91c9f7]' : ''} ${
                item.off ? 'text-[#6d6d6d]' : 'text-black'
              }`}
            >
              <span>{item.label}</span>
              <span className="ml-auto pr-3.5">{item.keys}</span>
              {item.sub && (
                <svg viewBox="0 0 6 8" className="mr-1 h-2 w-1.5" aria-hidden="true">
                  <path d="M1 0 L5 4 L1 8" fill="none" stroke="currentColor" strokeWidth="1.2" />
                </svg>
              )}
            </button>
          ))}
        </div>
      ))}
    </div>
  );
}

function MenuBar() {
  return (
    <nav className="flex h-5 shrink-0 gap-px bg-white text-xs">
      {menus.map((m, i) => (
        <div key={m} className="relative">
          <button
            className={`h-[19px] border px-1.5 leading-4 whitespace-nowrap ${
              i === 1 ? 'border-[#99d1ff] bg-[#cce8ff]' : 'border-transparent'
            }`}
          >
            {m}
          </button>
          {i === 1 && <EditMenu />}
        </div>
      ))}
    </nav>
  );
}

function SideBar() {
  return (
    <aside className="w-[74px] shrink-0 border-r-2 border-[#8a8a8a] bg-[#f0f0f0] pt-[54px]">
      <div className="border-r border-b border-[#b5b5b5] bg-[#f2f2f2] pt-1 pl-0.5">
        <div className="mb-1 h-0.5 border-t-2 border-dotted border-[#b4b4b4]" />
        {sideTools.map((section, i) => (
          <div key={i}>
            {i > 0 && <div className="mr-1 ml-0.5 flex h-2 items-center"><hr className="w-full border-[#7d7d7d]" /></div>}
            <div className="grid grid-cols-[34px_34px]">{section.map(renderTool)}</div>
          </div>
        ))}
      </div>
    </aside>
  );
}

// Model axes; dashed half is the negative direction
function Viewport() {
  return (
    <main className="relative flex-1 overflow-hidden border-t border-[#777] bg-[#bebfc5]">
      <svg viewBox="74 196 1560 815" preserveAspectRatio="none" shapeRendering="crispEdges" className="absolute inset-0 h-full w-full" aria-hidden="true">
        <path d="M827 611 L823 196" stroke="#1010a0" />
        <path d="M827 611 L830 1011" stroke="#1010a0" strokeDasharray="1 2" />
        <path d="M827 611 L1585 196" stroke="#14a814" />
        <path d="M827 611 L93 1011" stroke="#14a014" strokeDasharray="1 4 3 4" />
        <path d="M827 611 L1634 782" stroke="#b81010" />
        <path d="M827 611 L74 451" stroke="#b01010" strokeDasharray="1 3" />
      </svg>
    </main>
  );
}

function Tray() {
  return (
    <aside className="w-[286px] shrink-0 border-l-[3px] border-white bg-[#f0f0f0] pl-[3px]">
      <div className="h-full bg-[#f4f7fc]">
        <div className="flex h-[18px] items-center bg-linear-to-b from-[#bfcddb] to-[#dbe5f1] pr-1 pl-1 text-[13px]">
          <h2>默认面板</h2>
          <button aria-label="固定" className="ml-auto">
            <svg viewBox="0 0 8 10" className="h-2.5 w-2"><path d="M2 1 H6 V6 M2 1 V6 M0 6 H8 M4 6 V10 M5 1 V6" fill="none" stroke="#000" /></svg>
          </button>
          <button aria-label="关闭面板" className="ml-2 flex size-3 items-center justify-center bg-[#b94b4f]">
            <svg viewBox="0 0 6 6" className="size-1.5"><path d="M0 0 L6 6 M6 0 L0 6" stroke="#fff" strokeWidth="1.500" /></svg>
          </button>
        </div>
        <ul className="mt-[3px] flex flex-col gap-px">
          {panels.map((p) => (
            <li key={p} className="flex h-[18px] items-center border border-[#b5b5b5] bg-linear-to-b from-[#ececec] to-[#b6b6b6] pr-0.5 pl-2">
              <button className="flex items-center text-xs">
                <svg viewBox="0 0 6 8" className="mr-[7px] h-2 w-1.5"><path d="M0 0 L6 4 L0 8 Z" /></svg>
                {p}
              </button>
              <button aria-label={`关闭${p}`} className="ml-auto flex size-[13px] items-center justify-center border border-[#aaa] bg-[#eee]">
                <svg viewBox="0 0 5 5" className="size-[5px]"><path d="M0 0 L5 5 M5 0 L0 5" stroke="#111" strokeWidth="1.200" /></svg>
              </button>
            </li>
          ))}
        </ul>
      </div>
    </aside>
  );
}

function StatusBar() {
  return (
    <div className="flex h-[29px] shrink-0 items-center border-t border-white bg-[#f0f0f0]">
      <svg viewBox="0 0 14 14" className="ml-1.5 size-3.5">
        <circle cx="7" cy="7" r="6.500" fill="none" stroke="#aaa" />
        <path d="M7 12 L5 7 A2.500 2.500 0 1 1 9 7 Z" fill="#999" />
      </svg>
      <svg viewBox="0 0 14 14" className="ml-4 size-3.5">
        <circle cx="7" cy="7" r="6.300" fill="none" stroke="#111" strokeWidth="1.400" />
        <path d="M6 3 H8 V4.500 H6 Z M5 5 H9 V8 H8 V11.500 H6 V8 H5 Z" fill="#111" />
      </svg>
      <span className="mr-2.5 ml-3 h-2.5 border-l border-[#999]" />
      <span className="text-base">撤销 隐藏</span>
      <input readOnly aria-label="数值" className="mr-1.5 ml-auto h-6 w-36 border border-[#abb4c0] bg-[#efefef]" />
    </div>
  );
}

const taskIcons = {
  pc: (
    <svg viewBox="0 0 24 24" className="size-6">
      <path d="M1 4 H23 V18 H1 Z" fill="#2496e8" />
      <path d="M1 4 H23 V10 Q12 10 6 18 H1 Z" fill="#64bdf8" />
      <path d="M1 18 H23 M8 21 H16" stroke="#567" strokeWidth="1.500" />
    </svg>
  ),
  cad: (
    <svg viewBox="0 0 24 24" className="size-6">
      <path d="M0 0 H24 V24 H0 Z" fill="#e6f2f0" />
      <path d="M1.500 1.500 H22.500 V22.500 H1.500 Z" fill="#2a8f8a" />
      <path d="M12 1 V23 M16 1 V14 M12 14 H20 M15 14 V20 H20 V16" fill="none" stroke="#cfe8e4" />
      <text x="1" y="20" fontSize="18" fontWeight="700" fill="#fff" fontFamily="Liberation Sans, sans-serif">A</text>
    </svg>
  ),
  browser: (
    <svg viewBox="0 0 24 24" className="size-6">
      <circle cx="12" cy="13" r="10" fill="#58b53a" />
      <path d="M6 13 H18 C18 5 6 5 6 13 C6 20 15 20 18 16" fill="none" stroke="#fff" strokeWidth="2.600" />
      <path d="M1 22 C0 12 12 0 22 1" fill="none" stroke="#7cc45c" strokeWidth="2" />
    </svg>
  ),
  swirl: (
    <svg viewBox="0 0 24 24" className="size-6">
      <path d="M13 3 C18 5 17 9 23 9 C20 19 10 22 5 18 C-1 13 2 3 10 3 Z" fill="#f0ac48" />
      <path d="M16 10 C16 16 8 17 6 12 C5 7 12 5 13 10 C13 13 9 13 9 11" fill="none" stroke="#fbe3b4" strokeWidth="1.600" />
    </svg>
  ),
  game: (
    <svg viewBox="0 0 24 24" className="size-6">
      <path d="M0 0 H24 V24 H0 Z" fill="#3c9a68" />
      <path d="M4 8 C8 2 20 3 20 10 C21 18 15 22 8 21 C4 17 2 12 4 8 Z" fill="#71816a" />
      <path d="M2 12 a3 3 0 1 0 6 0 a3 3 0 1 0 -6 0 M10 8 a3 3 0 1 0 6 0 a3 3 0 1 0 -6 0" fill="#f0eecb" />
      <path d="M14 14 L24 10 V17 L19 24 H14 L18 18 Z" fill="#e6781c" />
      <path d="M0 18 L12 20 V24 H0 Z" fill="#333a28" />
    </svg>
  ),
  sketchup: <SketchUpLogo className="size-6" />,
  zip: (
    <svg viewBox="0 0 24 24" className="size-6">
      <path d="M0 1 H24 V15 H0 Z" fill="#47aef0" />
      <path d="M0 14 L12 7 L24 14 Z" fill="#8ad0f6" />
      <path d="M0 15 H24 V19 H0 Z" fill="#6cb33a" />
      <path d="M0 18 H24 V22 H0 Z" fill="#f0ac24" />
      <path d="M15 1 H20 V23 H15 Z" fill="#5c3420" />
      <path d="M14 15 H21 V18 H14 Z" fill="#d8b060" />
    </svg>
  ),
};

const tasks = [
  { id: 'pc' },
  { id: 'cad' },
  { id: 'browser', open: true },
  { id: 'swirl', open: true },
  { id: 'game', open: true },
  { id: 'sketchup', open: true, current: true },
  { id: 'zip', open: true },
];

function TaskBar() {
  return (
    <footer className="flex h-10 shrink-0 items-center bg-[#d6d6d6] text-xs">
      <button aria-label="开始" className="flex w-12 justify-center">
        <svg viewBox="0 0 16 16" className="size-4"><path d="M0 2.500 L7 1.500 V7.500 H0 Z M8 1.300 L16 0 V7.500 H8 Z M0 8.500 H7 V14.500 L0 13.500 Z M8 8.500 H16 V16 L8 14.700 Z" /></svg>
      </button>
      <button aria-label="搜索" className="flex w-12 justify-center">
        <svg viewBox="0 0 16 16" className="size-4"><circle cx="10" cy="6" r="5" fill="none" stroke="#000" strokeWidth="1.400" /><path d="M6.500 9.500 L0 16" stroke="#000" strokeWidth="1.400" /></svg>
      </button>
      <button aria-label="Cortana" className="flex w-12 justify-center">
        <svg viewBox="0 0 16 16" className="size-4"><circle cx="8" cy="8" r="6.700" fill="none" stroke="#111" strokeWidth="2.200" /></svg>
      </button>
      <div className="ml-[3px] flex h-full gap-px">
        {tasks.map((t) => (
          <button key={t.id} aria-label={t.id} className={`flex w-12 flex-col items-center ${t.current ? 'bg-[#f0f0f0]' : ''}`}>
            <span className="flex h-[38px] items-center">{taskIcons[t.id]}</span>
            {t.open && <span className={`h-0.5 bg-[#1272c4] ${t.current ? 'w-full' : 'w-10'}`} />}
          </button>
        ))}
      </div>
      <div className="ml-auto flex h-full items-center">
        <button aria-label="显示隐藏的图标" className="mr-2.5">
          <svg viewBox="0 0 12 7" className="h-[7px] w-3"><path d="M1 6 L6 1 L11 6" fill="none" stroke="#111" strokeWidth="1.300" /></svg>
        </button>
        <svg viewBox="0 0 16 20" className="h-5 w-4 overflow-visible">
          <text x="1" y="17" fontSize="20" fill="#fff" stroke="#555" strokeWidth="0.700" fontFamily="Liberation Sans, sans-serif">A</text>
        </svg>
        <svg viewBox="0 0 16 16" className="ml-3 size-4">
          <path d="M0 2 L14 0 L16 14 L2 16 Z" fill="#e9562b" />
          <path d="M12 4 C7 3 4 4 5 7 C7 9 11 7 11 10 C11 12 7 13 4 12" fill="none" stroke="#fff" strokeWidth="2" />
        </svg>
        <div className="ml-4 w-[62px] text-center leading-[19px] whitespace-nowrap">
          <div>16:42</div>
          <div>2021/4/13</div>
        </div>
        <button aria-label="通知" className="mr-1.5 ml-4">
          <svg viewBox="0 0 26 26" className="size-[26px]">
            <path d="M1 2 H17 V14 H8 L5 18 V14 H1 Z" fill="#000" />
            <path d="M4 5 H14 M4 8 H14 M4 11 H10" stroke="#fff" />
            <circle cx="17" cy="17" r="8" fill="#d9d9d9" stroke="#777" />
            <text x="14" y="21" fontSize="11" fontWeight="700" fontFamily="Noto Sans, sans-serif">2</text>
          </svg>
        </button>
        <span className="ml-1.5 h-full w-1 border-l border-[#aaa]" />
      </div>
    </footer>
  );
}

function ImeBar() {
  return (
    <div className="absolute right-0 bottom-[148px] flex h-6 w-28 items-center justify-end gap-2 border border-[#9aa0a8] bg-white pr-[5px]">
      <svg viewBox="0 0 16 12" className="h-3 w-4">
        <path d="M0 0 H16 V12 H0 Z" fill="#2a6fb5" />
        <path d="M2 3 H14 M2 6 H14" stroke="#fff" strokeWidth="1.500" strokeDasharray="2 1" />
        <path d="M4 9 H12" stroke="#fff" strokeWidth="1.500" />
      </svg>
      <svg viewBox="0 0 14 14" className="size-3.5">
        <circle cx="6" cy="3" r="3" fill="#b9c2d3" />
        <path d="M0 13 C0 5 12 5 12 9 V13 Z" fill="#b9c2d3" />
        <path d="M8 8 H13.500 V13.500 H8 Z" fill="#fff" stroke="#b9c2d3" />
      </svg>
      <svg viewBox="0 0 14 14" className="size-3.5">
        <path d="M4 0 Q7 3 10 0 L14 3 L12 7 L11 6 V14 H3 V6 L2 7 L0 3 Z" fill="#2a6fb5" />
      </svg>
      <svg viewBox="0 0 13 13" className="size-[13px]">
        <path d="M0 0 H6 V6 H0 Z M0 7 H6 V13 H0 Z M7 7 H13 V13 H7 Z" fill="#2a6fb5" />
        <path d="M7.750 .75 H12.250 V5.250 H7.750 Z" fill="none" stroke="#2a6fb5" strokeWidth="1.500" />
      </svg>
    </div>
  );
}

function Watermark() {
  return (
    <div className="absolute right-24 bottom-[37px] z-30 flex h-[185px] w-[360px] items-center bg-[#222f54] pl-3 text-[#d2d2d2]">
      <svg viewBox="0 0 82 110" className="h-[110px] w-[82px] shrink-0" fill="#d2d2d2" aria-hidden="true">
        <path d="M5 13 L15 18 L20 17 Q24 16 25 21 L34 27 L33 30 L26 31 C17 35 18 46 22 52 C28 58 44 57 58 60 C67 62 71 67 70 72 L69 82 L74 95 V109 H66 L67 99 L62 88 L61 92 L65 100 L63 109 H59 L60 98 L53 83 C44 80 32 80 24 76 C21 82 21 95 19 109 H11 L15 94 L13 79 C7 72 -2 61 1 52 C4 44 13 41 13 29 L10 22 Z" />
        <path d="M24 19 Q28 14 37 16 Q47 12 59 14 Q72 14 81 6 M25 18 Q33 22 47 20 Q60 20 69 12 M23 17 Q21 9 25 5 M29 15 Q27 7 32 3 M36 14 Q42 10 38 4 M43 12 Q48 7 46 1 M58 16 L62 6" fill="none" stroke="#d2d2d2" strokeWidth="2.400" />
      </svg>
      <div className="mb-1 ml-[17px] whitespace-nowrap">
        <div className="flex items-center leading-[60px]">
          <span className="font-[Roboto] text-[66px] font-medium">3D</span>
          <span className="font-['Liberation_Sans','Noto_Sans_CJK_SC',sans-serif] text-[53px] font-bold">溜溜网</span>
        </div>
        <div className="font-['DejaVu_Sans'] text-[44px] leading-[46px] font-extralight">3D66.COM</div>
      </div>
    </div>
  );
}

export default function App() {
  return (
    <div className="relative flex h-screen min-h-[1060px] flex-col overflow-hidden bg-[#f0f0f0] font-['Noto_Sans','Noto_Sans_CJK_SC',sans-serif] text-black">
      <TitleBar />
      <MenuBar />
      {toolRows.map((row, i) => (
        <div key={i} className="flex h-[38px] shrink-0">
          {row.map((group, j) => (
            <ToolGroup key={j} {...group} />
          ))}
        </div>
      ))}
      <div className="flex flex-1">
        <SideBar />
        <Viewport />
        <Tray />
      </div>
      <StatusBar />
      <TaskBar />
      <ImeBar />
      <Watermark />
      <svg viewBox="0 0 650 660" className="pointer-events-none absolute top-0 left-0 z-30 h-[660px] w-[650px]" aria-hidden="true">
        <path d="M116 339 L134 343 L131 346 L634 644 L128 350 L126 354 Z" fill="none" stroke="#d8262c" strokeWidth="2" />
      </svg>
    </div>
  );
}
